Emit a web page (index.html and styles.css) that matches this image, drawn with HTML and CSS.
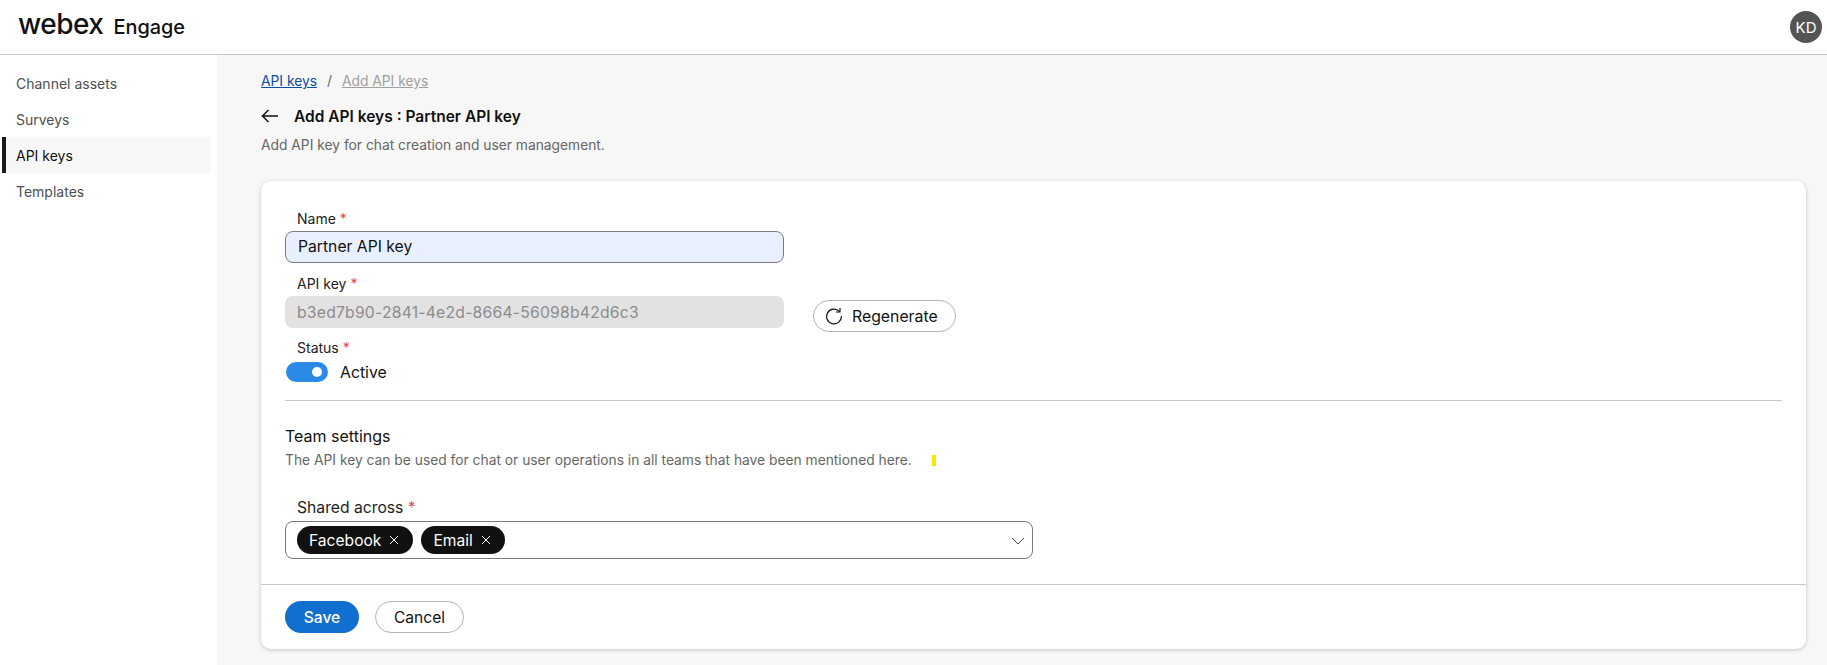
FILE: index.html
```html
<!DOCTYPE html>
<html lang="en">
<head>
<meta charset="utf-8">
<title>Webex Engage</title>
<link rel="stylesheet" href="styles.css">
</head>
<body>
<header class="topbar">
  <div class="brand"><span class="logo">webex</span><span class="product">Engage</span></div>
  <div class="avatar">KD</div>
</header>
<div class="shell">
  <nav class="sidebar">
    <a class="nav-item">Channel assets</a>
    <a class="nav-item">Surveys</a>
    <a class="nav-item active">API keys</a>
    <a class="nav-item">Templates</a>
  </nav>
  <main class="content">
    <div class="crumbs"><a class="crumb-link">API keys</a><span class="crumb-sep">/</span><a class="crumb-current">Add API keys</a></div>
    <div class="title-row">
      <svg class="back" width="18" height="14" viewBox="0 0 18 14"><path d="M17 7H1.5M7.5 1L1.5 7l6 6" fill="none" stroke="#111" stroke-width="1.5"/></svg>
      <h1 class="title">Add API keys : Partner API key</h1>
    </div>
    <p class="subtitle">Add API key for chat creation and user management.</p>
    <section class="card">
      <div class="card-body">
        <label class="label">Name <span class="req">*</span></label>
        <div class="input filled">Partner API key</div>
        <label class="label second">API key <span class="req">*</span></label>
        <div class="key-row">
          <div class="input disabled">b3ed7b90-2841-4e2d-8664-56098b42d6c3</div>
          <button class="btn regen">
            <svg width="18" height="18" viewBox="0 0 18 18"><path d="M14.6 4.6A7.4 7.4 0 1 0 16.4 9" fill="none" stroke="#111" stroke-width="1.2"/><path d="M15 1v4h-4" fill="none" stroke="#111" stroke-width="1.2"/></svg>
            Regenerate
          </button>
        </div>
        <label class="label third">Status <span class="req">*</span></label>
        <div class="status-row"><span class="toggle"><span class="knob"></span></span><span class="status-text">Active</span></div>
        <hr class="rule">
        <h2 class="section-title">Team settings</h2>
        <div class="section-sub-row">
          <p class="section-sub">The API key can be used for chat or user operations in all teams that have been mentioned here.</p>
          <span class="marker"></span>
        </div>
        <label class="label shared">Shared across <span class="req">*</span></label>
        <div class="select">
          <span class="chip">Facebook <svg width="10" height="10" viewBox="0 0 10 10"><path d="M1 1l8 8M9 1l-8 8" stroke="#fff" stroke-width="1"/></svg></span>
          <span class="chip">Email <svg width="10" height="10" viewBox="0 0 10 10"><path d="M1 1l8 8M9 1l-8 8" stroke="#fff" stroke-width="1"/></svg></span>
          <svg class="chev" width="14" height="8" viewBox="0 0 14 8"><path d="M1 1l6 6 6-6" fill="none" stroke="#444" stroke-width="1"/></svg>
        </div>
      </div>
      <footer class="card-foot">
        <button class="btn save">Save</button>
        <button class="btn cancel">Cancel</button>
      </footer>
    </section>
  </main>
</div>
</body>
</html>
```
FILE: styles.css
```css
* { box-sizing: border-box; }
html, body { margin: 0; height: 100%; overflow: hidden; }
body { font-family: Inter, "Noto Sans", sans-serif; font-size: 14px; color: #111; background: #f7f7f7; }
.topbar { height: 55px; background: #fff; border-bottom: 1px solid #c9c9c9; display: flex; align-items: center; justify-content: space-between; padding: 0 5px 0 18px; }
.brand { display: flex; align-items: baseline; gap: 10px; margin-bottom: 6px; }
.logo { font-size: 28px; font-weight: 500; letter-spacing: -0.5px; line-height: 30px; }
.product { font-size: 19.9px; font-weight: 500; }
.avatar { width: 32px; height: 32px; border-radius: 50%; background: #545454; color: #fff; font-size: 15px; display: flex; align-items: center; justify-content: center; }
.shell { display: flex; height: 610px; }
.sidebar { width: 217px; background: #fff; padding: 10px 6px 0 2px; flex: none; }
.nav-item { display: flex; align-items: center; height: 36px; padding-left: 14px; color: #4f4f4f; font-size: 14px; }
.nav-item.active { background: #f7f7f7; border-left: 4px solid #1a1a1a; padding-left: 10px; color: #111; }
.content { flex: 1; padding: 15px 21px 0 44px; }
.crumbs { display: flex; align-items: center; height: 22px; font-size: 13.8px; }
.crumb-link { color: #0a4fa8; text-decoration: underline; }
.crumb-sep { color: #666; margin: 0 10px; }
.crumb-current { color: #a0a0a0; text-decoration: underline; }
.title-row { display: flex; align-items: center; gap: 15px; margin-top: 12px; height: 24px; }
.title { font-size: 15.5px; font-weight: 600; margin: 0; }
.subtitle { margin: 7px 0 0; font-size: 13.8px; line-height: 20px; color: #666; }
.card { margin-top: 26px; height: 468px; background: #fff; border-radius: 10px; box-shadow: 0 1px 4px rgba(0,0,0,.2); display: flex; flex-direction: column; }
.card-body { flex: 1; padding: 28px 24px 0; }
.label { display: block; margin-left: 12px; height: 20px; line-height: 20px; font-size: 14px; color: #222; }
.req { color: #e5484d; }
.input { width: 499px; height: 32px; border-radius: 8px; display: flex; align-items: center; padding-left: 12px; font-size: 15.7px; }
.filled { margin-top: 2px; background: #e8f0fe; border: 1px solid #7a7a86; padding-bottom: 1px; }
.second { margin-top: 11px; }
.key-row { display: flex; align-items: flex-start; margin-top: 2px; }
.disabled { background: #e2e2e2; color: #8c8c8c; letter-spacing: .23px; }
.btn { font-family: inherit; border-radius: 16px; height: 32px; font-size: 15.6px; cursor: pointer; }
.regen { margin: 4px 0 0 29px; width: 143px; background: #fff; border: 1px solid #b5b5b5; color: #111; display: flex; align-items: center; gap: 9px; padding: 0 0 0 11px; font-size: 15.8px; }
.third { margin-top: 6px; }
.status-row { display: flex; align-items: center; gap: 12px; margin: 4px 0 0 1px; height: 20px; }
.toggle { width: 42px; height: 20px; border-radius: 10px; background: #2b8ae6; position: relative; }
.knob { position: absolute; right: 6px; top: 5px; width: 10px; height: 10px; border-radius: 50%; background: #fff; }
.status-text { font-size: 15.8px; }
.rule { margin: 18px 0 0; border: 0; border-top: 1px solid #c9c9c9; }
.section-title { margin: 25px 0 0; font-size: 16px; font-weight: 400; line-height: 20px; }
.section-sub-row { display: flex; align-items: center; gap: 20px; margin-top: 4px; height: 20px; }
.section-sub { margin: 0; font-size: 13.8px; color: #666; }
.marker { width: 4px; height: 11px; background: #ffe600; }
.shared { margin-top: 28px; font-size: 15.7px; line-height: 20px; }
.select { position: relative; display: flex; align-items: center; gap: 8px; margin-top: 3px; width: 748px; height: 38px; border: 1px solid #7a7a7a; border-radius: 8px; padding-left: 11px; }
.chip { height: 28px; border-radius: 14px; background: #111; color: #fff; font-size: 15.6px; display: flex; align-items: center; gap: 8px; padding: 0 14px 0 12px; }
.chev { position: absolute; right: 7px; top: 15px; }
.card-foot { height: 65px; border-top: 1px solid #c9c9c9; display: flex; align-items: flex-start; gap: 16px; padding: 16px 24px 0; }
.save { width: 74px; background: #1170cf; color: #fff; border: 0; font-weight: 500; }
.cancel { width: 89px; background: #fff; border: 1px solid #b5b5b5; color: #111; }
```
